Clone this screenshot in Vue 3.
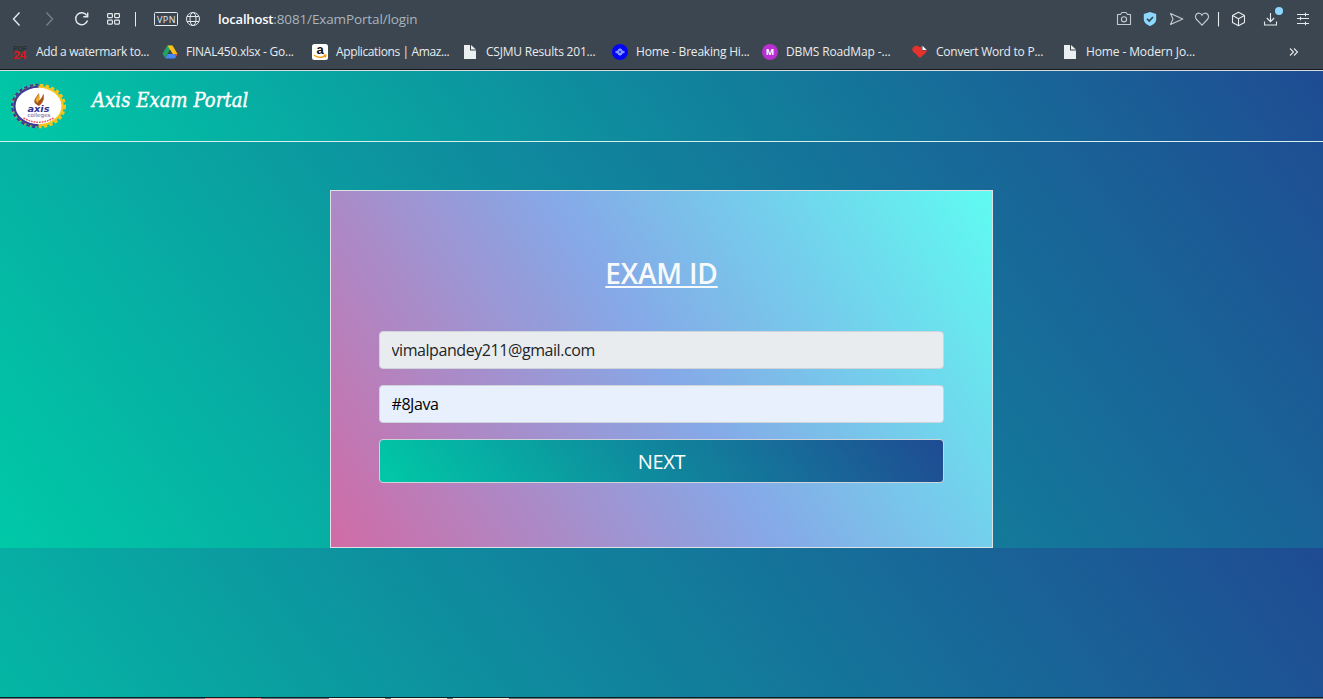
<script setup>
import { ref } from 'vue'

const bookmarks = [
  { icon: 'pdf', label: 'Add a watermark to...', tracking: -0.34 },
  { icon: 'drive', label: 'FINAL450.xlsx - Go...', tracking: -0.25 },
  { icon: 'amazon', label: 'Applications | Amaz...', tracking: -0.38 },
  { icon: 'page', label: 'CSJMU Results 201...', tracking: -0.2 },
  { icon: 'news', label: 'Home - Breaking Hi...', tracking: -0.2 },
  { icon: 'medium', label: 'DBMS RoadMap -...', tracking: -0.14 },
  { icon: 'heart', label: 'Convert Word to P...', tracking: -0.25 },
  { icon: 'page', label: 'Home - Modern Jo...', tracking: -0.12 }
]
const email = ref('vimalpandey211@gmail.com')
const examId = ref('#8Java')
</script>

<template>
  <div class="window">
    <div class="chrome">
      <div class="toolbar">
        <svg class="tools" width="210" height="38" viewBox="0 0 210 38" fill="none" stroke="#e4e9ed" stroke-width="1.4">
          <path d="M19.500 12.500 13.500 19l6 6.500" />
          <path d="M46.500 12.500 52.500 19l-6 6.500" stroke="#71808b" />
          <path d="M86.800 15.500A6 6 0 1 0 87.500 20.500M87.700 12.500v4.200h-4.400" />
          <g stroke-width="1.2">
            <rect x="107.600" y="13.600" width="4.800" height="4" rx=".8" />
            <rect x="114.600" y="13.600" width="4.800" height="4" rx=".8" />
            <rect x="107.600" y="20.100" width="4.800" height="4" rx=".8" />
            <rect x="114.600" y="20.100" width="4.800" height="4" rx=".8" />
          </g>
          <path d="M135.500 12v14.500" stroke-width="1" />
          <rect x="154.500" y="12.500" width="23" height="13" rx="1" stroke-width="1" />
          <text x="157" y="22.600" class="vpn" textLength="18.500">VPN</text>
          <g stroke-width="1">
            <circle cx="193" cy="19" r="6.500" />
            <ellipse cx="193" cy="19" rx="3" ry="6.500" />
            <path d="M187 16.500h12M187 21.500h12" />
          </g>
        </svg>
        <div class="address"><b>localhost</b>:8081/ExamPortal/login</div>
        <svg class="actions" width="223" height="38" viewBox="1100 0 223 38" fill="none" stroke="#e4e9ed" stroke-width="1.100">
          <path d="M1117.500 14.500h3l1.500-2h4l1.500 2h3v10h-13z" stroke-linejoin="round" stroke="#c3cbd0" />
          <circle cx="1124" cy="19.300" r="2.600" stroke="#c3cbd0" />
          <path d="M1150 12l6.200 2v5c0 3.500-2.700 5.700-6.200 7-3.500-1.300-6.200-3.500-6.200-7v-5z" fill="#8cd8ff" stroke="none" />
          <path d="M1147 18.800l2.200 2.200 3.800-4" stroke="#33414d" stroke-width="1.600" />
          <path d="M1170.500 13.500l12.300 5.500-12.300 5.500 2.500-5.500z" stroke-linejoin="round" stroke="#c3cbd0" />
          <path d="M1202 25.200l-5.400-5.700c-1.600-1.700-1.400-4.200.1-5.500 1.700-1.500 4.100-.9 5.300 1.300 1.200-2.200 3.600-2.800 5.300-1.300 1.500 1.300 1.700 3.800.1 5.500z" stroke="#c3cbd0" />
          <path d="M1218.500 12v14.500" />
          <path d="M1238.500 12.300l6 3.200v7l-6 3.300-6-3.300v-7zM1232.500 15.500l6 3.200 6-3.200M1238.500 18.700v7" stroke-linejoin="round" />
          <path d="M1270.500 13v8.500M1266.800 18l3.700 3.700 3.700-3.700M1264.500 21.500v3.500h12v-3.500" />
          <circle cx="1279" cy="11" r="4" fill="#8cd8ff" stroke="none" />
          <path d="M1297 14.500h12M1297 18.500h12M1297 23.500h12M1305.500 12.700v3.600M1300.500 16.700v3.600M1305.500 21.700v3.600" />
        </svg>
      </div>

      <div class="bookmarks">
        <div v-for="(b, i) in bookmarks" :key="i" class="bookmark">
          <svg width="16" height="16" viewBox="0 0 16 16">
            <g v-if="b.icon === 'pdf'" class="pdf">
              <text x="1" y="6.500" textLength="14" lengthAdjust="spacingAndGlyphs" fill="#2c2e30" font-size="7">PDF</text>
              <text x="1.500" y="15" textLength="12.500" lengthAdjust="spacingAndGlyphs" fill="#e11414" font-size="10.500">24</text>
            </g>
            <g v-else-if="b.icon === 'drive'">
              <path d="M5.300 1.500h5L8 6 3.200 14 .5 9.800z" fill="#20a464" />
              <path d="M5.500 1.500h5l5 8.500h-5z" fill="#fbc116" />
              <path d="M3.200 14.500 5.700 10h9.800l-2.500 4.500z" fill="#4688f4" />
              <path d="M8 5.800 5.600 10h4.900z" fill="#3b4650" />
              <path d="M12.500 10h3l-1.800 3.300z" fill="#ea4335" />
            </g>
            <g v-else-if="b.icon === 'amazon'">
              <rect width="16" height="16" rx="2.500" fill="#fff" />
              <text x="8" y="10.300" text-anchor="middle" class="amz">a</text>
              <path d="M2 11.200q6 4 11 .7M11.500 11.200l2.300-.1-.5 2.400" fill="none" stroke="#ff9900" stroke-width="1.300" />
            </g>
            <g v-else-if="b.icon === 'page'" fill="#eceff1">
              <path d="M2 1h6v5.500h6V15H2z" />
              <path d="M9 1l5 4.500H9z" />
            </g>
            <g v-else-if="b.icon === 'news'">
              <circle cx="8" cy="8" r="8" fill="#0505f5" />
              <ellipse cx="8" cy="8" rx="4" ry="2" fill="#7f95ff" />
              <path d="M6 5.500h4M6 10.500h4M8 4v8M3 8h10" stroke="#8fa6ff" stroke-width=".9" />
              <circle cx="8" cy="8" r="1" fill="#2222f0" />
            </g>
            <g v-else-if="b.icon === 'medium'">
              <circle cx="8" cy="8" r="8" fill="#ba2fd0" />
              <text x="8" y="11.200" text-anchor="middle" class="med">M</text>
            </g>
            <g v-else>
              <path d="M8 14 1 7.500C-.8 5 1.200 1.700 4.200 1.700c1.600 0 2.800.6 3.800 1.600l2-1.500V6.500h5.400L14 8.500z" fill="#e5322d" />
              <path d="M10.500 1.800l4.200 4.200h-4.200z" fill="#fff" />
            </g>
          </svg>
          <span :style="{ letterSpacing: b.tracking + 'px' }">{{ b.label }}</span>
        </div>
        <svg class="more" width="12" height="12" viewBox="0 0 12 12" fill="none" stroke="#e4e9ed" stroke-width="1.100">
          <path d="M2 2.500 5.500 6 2 9.500M6 2.500 9.500 6 6 9.500" />
        </svg>
      </div>
    </div>

    <div class="page">
      <header class="navbar">
        <svg class="logo" width="56" height="46" viewBox="0 0 56 46">
          <ellipse cx="27.500" cy="23" rx="26.100" ry="20.900" fill="none" stroke="#f3c51d" stroke-width="2.800" stroke-dasharray="3.300 2.300" />
          <path d="M27.500 2.100A26.100 20.900 0 0 0 27.500 43.900" fill="none" stroke="#3a3a97" stroke-width="2.800" stroke-dasharray="3.300 2.300" />
          <ellipse cx="27.500" cy="23" rx="25.300" ry="20.200" fill="#f3c51d" />
          <path d="M27.500 2.800A25.300 20.200 0 0 0 27.500 43.200z" fill="#3a3a97" />
          <ellipse cx="27.500" cy="23" rx="23" ry="18.200" fill="#fff" />
          <path d="M28 23c-8-4-4-7 0-13-1 4 2 4-1 8 6-4 3-5 6-7-1 3 2 6-5 12z" fill="#a9531d" />
          <path d="M26.500 20c-5-5 2-6 2-11-1 4 2 5-2 11z" fill="#efac26" />
          <text x="16.500" y="29.300" textLength="22" lengthAdjust="spacingAndGlyphs" class="axis">axis</text>
          <text x="16.500" y="34.300" textLength="23" lengthAdjust="spacingAndGlyphs" class="colleges">colleges</text>
          <path d="M12.500 35Q27.500 43.500 42.500 35" fill="none" stroke="#ef5c65" stroke-width="1.500" stroke-dasharray="1.800 .9" />
        </svg>
        <h1>Axis Exam Portal</h1>
      </header>

      <form class="card" @submit.prevent>
        <h2><span>EXAM ID</span></h2>
        <input v-model="email" class="readonly" type="text" readonly />
        <input v-model="examId" class="filled" type="text" />
        <button type="submit"><span>NEXT</span></button>
      </form>
    </div>

    <div class="taskbar"><i class="red"></i><i></i><i></i><i></i></div>
  </div>
</template>

<style>
html, body { margin: 0; height: 100%; overflow: hidden; }
</style>

<style scoped>
* { box-sizing: border-box; }
.window {
  --sea: linear-gradient(55deg, #00c9a7, #10869d, #1f4b93);
  height: 699px;
  display: flex;
  flex-direction: column;
  font-family: "Open Sans", "Noto Sans", sans-serif;
}
.chrome {
  height: 71px;
  flex: none;
  background: #3b4650;
  border-bottom: 1px solid #d9dee1;
  box-shadow: inset 0 -1px #14191d;
  color: #e8ecef;
}
.toolbar { height: 38px; display: flex; }
.tools { margin-right: 8px; flex: none; }
.actions { margin-left: auto; flex: none; }
.vpn { font: 9px "Open Sans", sans-serif; fill: #e4e9ed; stroke: none; }
.address { line-height: 38px; font-size: 13.500px; letter-spacing: -.13px; color: #a9b5be; white-space: nowrap; }
.address b { font-size: 13px; font-weight: 600; color: #fff; letter-spacing: -.17px; }
.bookmarks { display: flex; height: 28px; align-items: center; padding-left: 12px; }
.bookmark { display: flex; align-items: center; width: 150px; gap: 8px; font-size: 12px; white-space: nowrap; flex: none; }
.bookmark span { margin-top: -1px; }
.bookmark svg { flex: none; }
.more { margin-left: 76px; flex: none; }
.pdf { font-family: "Liberation Sans", sans-serif; font-weight: 700; }
.amz { font: 700 13px/1 "Liberation Sans", sans-serif; fill: #111; }
.med { font: 700 9px/1 "Open Sans", sans-serif; fill: #fff; }
.axis { font: italic 700 8.500px/1 "DejaVu Sans", sans-serif; fill: #34348f; }
.colleges { font: 5.500px/1 "DejaVu Sans", sans-serif; fill: #5a5aa5; }

.page {
  flex: 1;
  background-image: var(--sea);
  background-size: 100% 477px;
}
.navbar {
  height: 71px;
  display: flex;
  align-items: flex-start;
  padding: 12px 0 0 11px;
  background: var(--sea);
  border-bottom: 1px solid #d5f0ee;
}
.logo { flex: none; }
h1 {
  margin: 3px 0 0 25px;
  font: italic 400 20px/28px "DejaVu Serif Condensed", "DejaVu Serif", serif;
  letter-spacing: .08px;
  -webkit-text-stroke: .4px #fff;
  color: #fff;
  white-space: nowrap;
}
.card {
  width: 663px;
  height: 358px;
  margin: 48px auto 0;
  padding: 64px 48px 0;
  border: 1px solid #dee2e6;
  background: linear-gradient(57deg, #d16ba5, #86a8e7, #5ffbf1);
  display: flex;
  flex-direction: column;
}
h2 { margin: 1px 0 41px; height: 34px; font-size: 28px; line-height: 34px; font-weight: 600; color: #f8f9fa; text-align: center; letter-spacing: -.2px; }
h2 span { text-decoration: underline; text-decoration-thickness: 2px; text-underline-offset: 2px; text-decoration-skip-ink: none; }
input {
  width: 100%;
  height: 38px;
  margin: 0 0 16px;
  padding: 6px 12px 6px 11.500px;
  border: 1px solid #ced4da;
  border-radius: 4px;
  font: 16px/24px "Open Sans", sans-serif;
  letter-spacing: -.43px;
  outline: none;
}
.readonly { background: #e9ecef; color: #212529; }
.filled { background: #e8f0fe; color: #000; }
button {
  height: 44px;
  padding: 2px 0 0;
  border: 1px solid #ced4da;
  border-radius: 4px;
  background: var(--sea);
  color: #fff;
  font: 20px/30px "Open Sans", sans-serif;
  letter-spacing: -.3px;
}
.taskbar { height: 2px; flex: none; display: flex; gap: 6px; padding-left: 205px; background: #5b7c7c; border-top: 1px solid #101c22; }
.taskbar i { width: 56px; height: 1px; background: #eef3ea; }
.taskbar .red { background: #ef8f87; margin-right: 62px; }
</style>
